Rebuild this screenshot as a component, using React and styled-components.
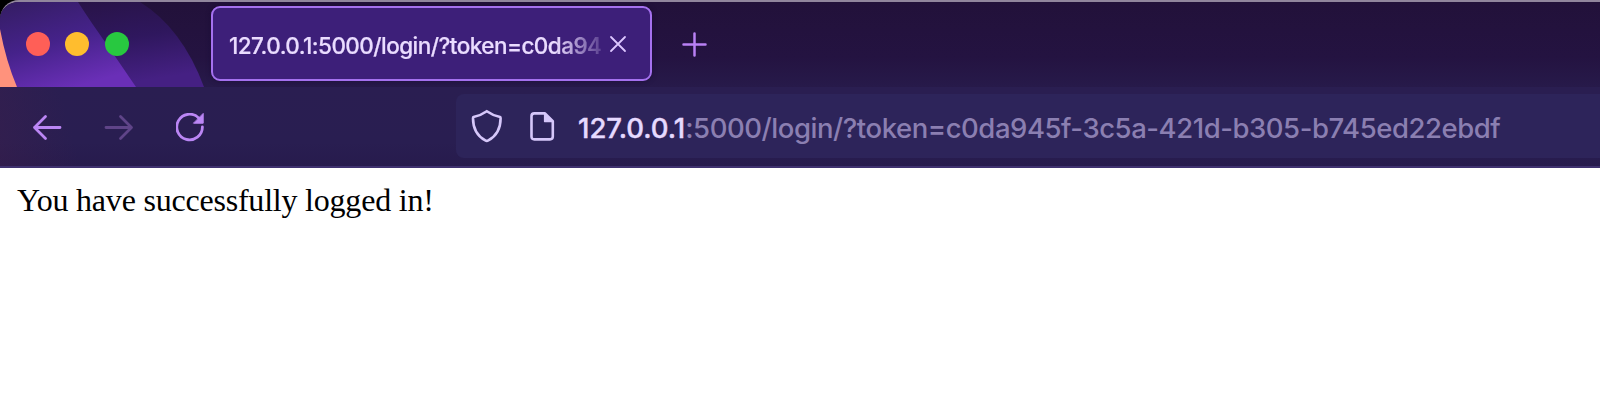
import React from "react";
import styled, { createGlobalStyle } from "styled-components";

const GlobalStyle = createGlobalStyle`
  * { box-sizing: border-box; }
  html, body { margin: 0; background: #fff; }
`;

const Window = styled.div`
  width: 1600px;
  height: 405px;
  overflow: hidden;
  display: flex;
  flex-direction: column;
  background: #fff;
`;

const Chrome = styled.header`
  height: 168px;
  flex: none;
  display: flex;
  flex-direction: column;
  background: #000;
`;

const TabStrip = styled.div`
  position: relative;
  height: 87px;
  flex: none;
  display: flex;
  align-items: flex-start;
  overflow: hidden;
  border-top: 2px solid #91869d;
  border-top-left-radius: 19px;
  background: linear-gradient(#22113a, #241341 65%, #271a4a);
`;

const ThemeArt = styled.svg`
  position: absolute;
  left: 0;
  top: -2px;
`;

const Lights = styled.div`
  position: relative;
  display: flex;
  gap: 15.5px;
  padding: 29.5px 0 0 25.5px;
  width: 211px;
`;

const Light = styled.span`
  width: 24px;
  height: 24px;
  border-radius: 50%;
  background: ${(p) => p.$color};
`;

const Tab = styled.div`
  position: relative;
  width: 441px;
  height: 75px;
  margin-top: 4px;
  padding-left: 16px;
  display: flex;
  align-items: center;
  border: 2px solid #a571ef;
  border-radius: 9px;
  background: #3d1f79;
  box-shadow: 0 0 5px rgba(20, 8, 45, 0.55);
`;

const TabTitle = styled.span`
  width: 375px;
  white-space: nowrap;
  color: #eadcff;
  font: 500 22.5px/32px Inter, sans-serif;
  letter-spacing: -0.55px;
  padding-top: 4px;
  -webkit-text-stroke: 0.2px #eadcff;
  mask-image: linear-gradient(to right, #000 87%, transparent 102%);
`;

const CloseIcon = styled.svg`
  margin-left: 5px;
`;

const NewTabIcon = styled.svg`
  margin: 30px 0 0 30px;
`;

const Toolbar = styled.div`
  height: 81px;
  flex: none;
  display: flex;
  border-bottom: 2px solid #3f316f;
  background:
    linear-gradient(75deg, rgba(68, 32, 74, 0.35), rgba(68, 32, 74, 0) 5%),
    linear-gradient(#2a1e51, #291e51 70%, #271b4d);
`;

const NavButtons = styled.nav`
  width: 456px;
  padding: 26px 0 0 32px;
  display: flex;
  gap: 42px;
`;

const UrlBar = styled.div`
  flex: 1;
  height: 64px;
  margin-top: 7px;
  padding-left: 14px;
  display: flex;
  align-items: center;
  border-radius: 8px 0 0 8px;
  background: #2d245a;
`;

const PageIcon = styled.svg`
  margin-left: 26px;
`;

const Url = styled.span`
  margin-left: 23px;
  padding-top: 3px;
  white-space: nowrap;
  color: #8b7fb1;
  font: 500 27.5px/40px Inter, sans-serif;
  letter-spacing: -0.45px;
`;

const Host = styled.span`
  color: #e6daff;
  letter-spacing: 0;
  -webkit-text-stroke: 0.4px #e6daff;
`;

const Page = styled.main`
  padding: 14px 17px;
  color: #000;
  font: 32px/36px "Liberation Serif", serif;
  letter-spacing: -0.21px;
`;

export default function App() {
  return (
    <Window>
      <GlobalStyle />
      <Chrome>
        <TabStrip>
          <ThemeArt width="210" height="87" viewBox="0 0 210 87">
            <defs>
              <linearGradient id="front" x1="0.1" y1="0" x2="0.55" y2="1">
                <stop offset="0" stopColor="#351d65" />
                <stop offset="0.5" stopColor="#45228a" />
                <stop offset="1" stopColor="#6a2fb7" />
              </linearGradient>
              <linearGradient id="back" x1="0" y1="0" x2="0.25" y2="1">
                <stop offset="0" stopColor="#281347" />
                <stop offset="0.5" stopColor="#2f175e" />
                <stop offset="1" stopColor="#452083" />
              </linearGradient>
            </defs>
            <path d="M70 2H140Q182 28 204 87H70Z" fill="url(#back)" />
            <path d="M0 2H78C96 30 116 57 136 87H0Z" fill="url(#front)" />
            <path d="M0 29Q6 61 17 87H0Z" fill="#ff927c" />
          </ThemeArt>
          <Lights>
            <Light $color="#ff5f57" />
            <Light $color="#ffbd2e" />
            <Light $color="#28c840" />
          </Lights>
          <Tab>
            <TabTitle>127.0.0.1:5000/login/?token=c0da94</TabTitle>
            <CloseIcon width="18" height="18" viewBox="0 0 18 18" fill="none" stroke="#dcc6ff" strokeWidth="1.8" strokeLinecap="round">
              <path d="M2 2L16 16M16 2L2 16" />
            </CloseIcon>
          </Tab>
          <NewTabIcon width="26" height="26" viewBox="0 0 26 26" fill="none" stroke="#b981f5" strokeWidth="2.5" strokeLinecap="round">
            <path d="M12.5 1.5V23.5M1.5 12.5H23.5" />
          </NewTabIcon>
        </TabStrip>
        <Toolbar>
          <NavButtons>
            <svg width="30" height="30" viewBox="0 0 30 30" fill="none" stroke="#bb86f5" strokeWidth="2.8" strokeLinecap="round" strokeLinejoin="round">
              <path d="M28 14.5H2.5M13.5 3.5L2.5 14.5L13.5 25.5" />
            </svg>
            <svg width="30" height="30" viewBox="0 0 30 30" fill="none" stroke="#5f4488" strokeWidth="2.8" strokeLinecap="round" strokeLinejoin="round">
              <path d="M2 14.5H27M16.5 3.5L27.5 14.5L16.5 25.5" />
            </svg>
            <svg width="30" height="30" viewBox="0 0 30 30" fill="none" stroke="#bb86f5" strokeWidth="2.8" strokeLinecap="round">
              <path d="M26.4 14A12.8 12.8 0 1 1 22.6 4.9" />
              <path d="M27.2 0.8V10.2H17.8Z" fill="#bb86f5" strokeWidth="1" strokeLinejoin="round" />
            </svg>
          </NavButtons>
          <UrlBar>
            <svg width="34" height="34" viewBox="0 0 34 34" fill="none" stroke="#d6c7fa" strokeWidth="2.6" strokeLinejoin="round">
              <path d="M16.8 2.2C12.5 5.2 8 7.1 3.5 8.1C3.1 8.2 3 8.7 3 9.2C3 19.5 6.8 26.7 15.3 31.4Q16.8 32.3 18.3 31.4C26.8 26.7 30.6 19.5 30.6 9.2C30.6 8.7 30.5 8.2 30.1 8.1C25.6 7.1 21.1 5.2 16.8 2.2Z" />
            </svg>
            <PageIcon width="25" height="30" viewBox="0 0 25 30" fill="none" stroke="#d6c7fa" strokeWidth="2.6" strokeLinejoin="round">
              <path d="M4.5 2.4H15L22.8 10.2V25.6Q22.8 28.4 20 28.4H4.3Q1.5 28.4 1.5 25.6V5.2Q1.5 2.4 4.3 2.4Z" />
              <path d="M14.5 2.4V10.6H22.8Z" fill="#d6c7fa" strokeWidth="1.2" />
            </PageIcon>
            <Url><Host>127.0.0.1</Host>:5000/login/?token=c0da945f-3c5a-421d-b305-b745ed22ebdf</Url>
          </UrlBar>
        </Toolbar>
      </Chrome>
      <Page>You have successfully logged in!</Page>
    </Window>
  );
}
